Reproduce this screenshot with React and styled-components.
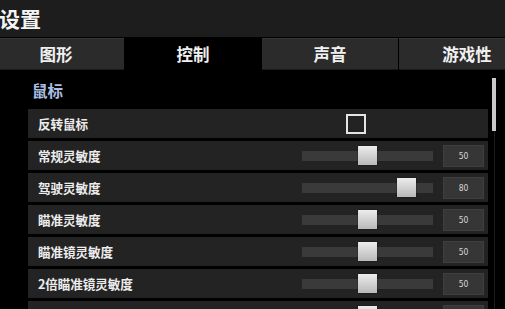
import styled, { createGlobalStyle } from "styled-components";

const GlobalStyle = createGlobalStyle`
	html, body {
		margin: 0;
		padding: 0;
		background: #000;
		overflow: hidden;
	}
	body {
		font-family: "Noto Sans CJK SC", "Noto Sans", sans-serif;
	}
`;

const Screen = styled.div`
	width: 505px;
	height: 309px;
	background: #000;
	overflow: hidden;
	display: flex;
	flex-direction: column;
`;

const TitleBar = styled.header`
	height: 37px;
	flex-shrink: 0;
	background: #1d1d1d;
	display: flex;
	align-items: center;
`;

const Title = styled.h1`
	margin: 0 0 0 -1px;
	font-size: 21px;
	font-weight: 700;
	color: #f4f4f4;
	line-height: 1;
`;

const TabRow = styled.nav`
	height: 32px;
	margin-top: 1px;
	margin-left: -12px;
	display: flex;
	gap: 1px;
	flex-shrink: 0;
`;

const Tab = styled.div`
	width: 136px;
	flex-shrink: 0;
	display: flex;
	align-items: center;
	justify-content: center;
	font-size: 16.5px;
	font-weight: 700;
	color: #f0f0f0;
	background: ${(p) => (p.$active ? "#000" : "#2b2b2b")};
	border-top: 1px solid ${(p) => (p.$active ? "#000" : "#383838")};
	border-bottom: 1px solid ${(p) => (p.$active ? "#000" : "#1a1a1a")};
`;

const Body = styled.div`
	flex: 1;
	display: flex;
	padding-left: 28px;
	overflow: hidden;
`;

const List = styled.div`
	width: 460px;
	display: flex;
	flex-direction: column;
	gap: 3px;
`;

const Heading = styled.h2`
	margin: 11px 0 6px 4px;
	height: 19px;
	font-size: 15.5px;
	font-weight: 700;
	line-height: 19px;
	color: #aabfe2;
`;

const Row = styled.div`
	height: 29px;
	flex-shrink: 0;
	background: #232323;
	display: flex;
	align-items: center;
	padding: 0 4px 0 10px;
`;

const Label = styled.span`
	flex: 1;
	font-size: 12.6px;
	font-weight: 700;
	color: #ececec;
	letter-spacing: -0.1px;
`;

const Checkbox = styled.div`
	width: 20px;
	height: 20px;
	box-sizing: border-box;
	border: 2px solid #e4e4e4;
	margin-right: 118px;
`;

const Track = styled.div`
	position: relative;
	width: 131px;
	height: 10px;
	background: #3a3a3a;
	margin-right: 10px;
`;

const Thumb = styled.div`
	position: absolute;
	top: -5px;
	width: 19px;
	height: 19px;
	background: linear-gradient(#ececec, #b9b9b9);
	box-shadow: 0 0 1px #000;
`;

const Value = styled.div`
	width: 41px;
	height: 22px;
	box-sizing: border-box;
	background: #363636;
	border: 1px solid #3e3e3e;
	display: flex;
	align-items: center;
	justify-content: center;
	font-family: "DejaVu Sans Condensed", "Liberation Sans", sans-serif;
	font-size: 8.5px;
	color: #d8d8d8;
`;

const Scrollbar = styled.div`
	width: 4px;
	margin: 8px 0 0 4px;
	display: flex;
	flex-direction: column;
`;

const ScrollThumb = styled.div`
	height: 53px;
	background: #c9c9c9;
`;

const ScrollTrack = styled.div`
	flex: 1;
	width: 1px;
	margin-left: 2px;
	background: #1c1c1c;
`;

const sliders = [
	{ label: "常规灵敏度", value: 50 },
	{ label: "驾驶灵敏度", value: 80 },
	{ label: "瞄准灵敏度", value: 50 },
	{ label: "瞄准镜灵敏度", value: 50 },
	{ label: "2倍瞄准镜灵敏度", value: 50 },
	{ label: "", value: 50, hidden: true },
];

function Slider({ value, hidden }) {
	return (
		<>
			<Track>
				<Thumb style={{ left: (131 * value) / 100 - 9.5 }} />
			</Track>
			<Value>{hidden ? "" : value}</Value>
		</>
	);
}

export default function App() {
	return (
		<>
			<GlobalStyle />
			<Screen>
				<TitleBar>
					<Title>设置</Title>
				</TitleBar>
				<TabRow>
					<Tab>图形</Tab>
					<Tab $active>控制</Tab>
					<Tab>声音</Tab>
					<Tab>游戏性</Tab>
				</TabRow>
				<Body>
					<List>
						<Heading>鼠标</Heading>
						<Row>
							<Label>反转鼠标</Label>
							<Checkbox />
						</Row>
						{sliders.map((s, i) => (
							<Row key={i}>
								<Label>{s.label}</Label>
								<Slider value={s.value} hidden={s.hidden} />
							</Row>
						))}
					</List>
					<Scrollbar>
						<ScrollThumb />
						<ScrollTrack />
					</Scrollbar>
				</Body>
			</Screen>
		</>
	);
}
